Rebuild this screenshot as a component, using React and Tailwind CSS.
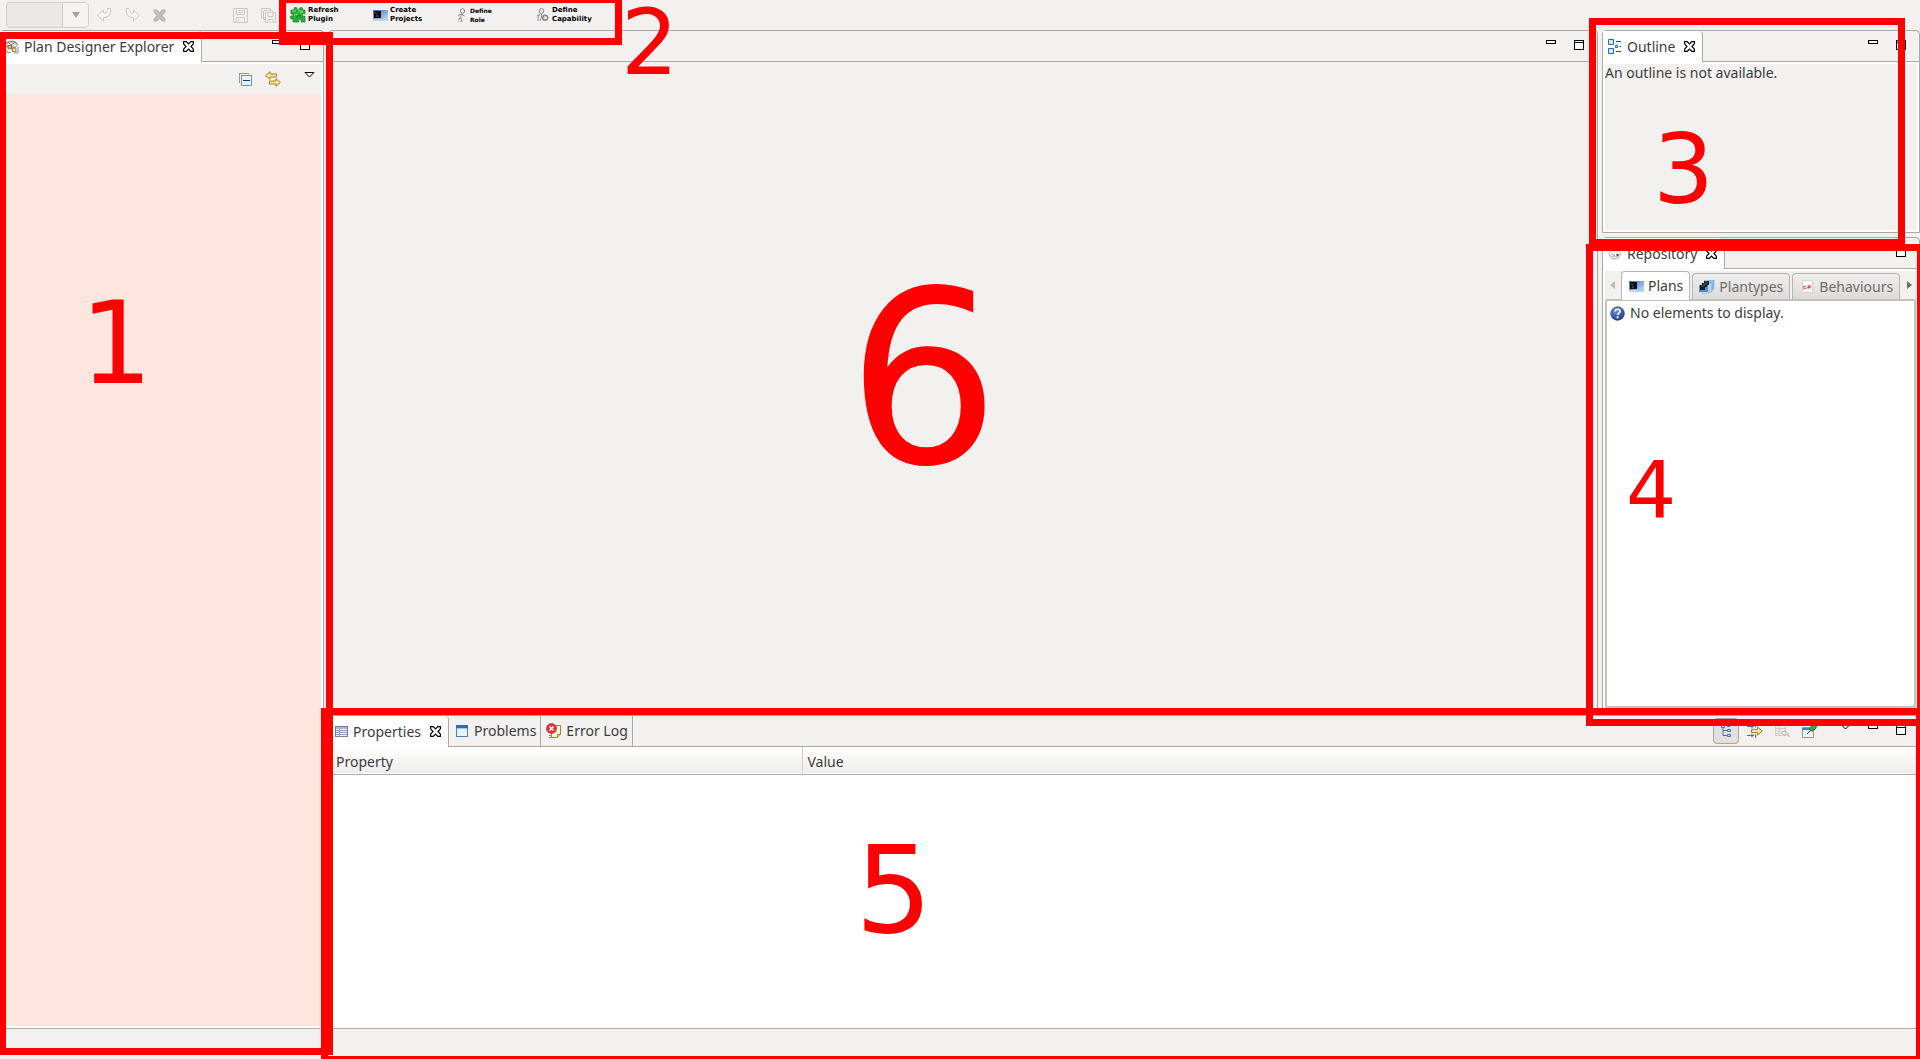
import React from "react";

/* ---------- icons ---------- */

const CloseIcon = () => (
  <svg width="11" height="11" viewBox="0 0 11 11" fill="#fff" stroke="#000" strokeWidth="1.200">
    <path d="M.6.6h2.600L5.500 3 7.800.6h2.600v2.200L8 5.500l2.400 2.700v2.200H7.800L5.500 8 3.200 10.400H.6V8.200L3 5.500.6 2.800z" />
  </svg>
);
const MinIcon = () => (
  <svg width="10" height="10" viewBox="0 0 10 10" shapeRendering="crispEdges">
    <rect x=".5" y=".5" width="9" height="3" fill="#fff" stroke="#000" />
  </svg>
);
const MaxIcon = () => (
  <svg width="10" height="10" viewBox="0 0 10 10" shapeRendering="crispEdges">
    <path d="M.5.5h9v9h-9zM.5 2.500h9" fill="#fff" stroke="#000" />
  </svg>
);
const MenuIcon = () => (
  <svg width="11" height="6" viewBox="0 0 11 6">
    <path d="M1 .5h9L5.500 5z" fill="#fff" stroke="#000" />
  </svg>
);
const ExplorerIcon = () => (
  <svg width="14" height="14" viewBox="0 0 14 14" fill="none">
    <ellipse cx="6.500" cy="4.500" rx="6" ry="3.600" fill="#dcdcdc" stroke="#8a8a8a" strokeWidth=".8" />
    <path d="M1 4c3-3 8-3 11 0M2 7l9-5M3 2l6 6" stroke="#777" strokeWidth=".8" />
    <rect x="3" y="5.500" width="3.500" height="3.500" fill="#e4b254" stroke="#8e6a2a" strokeWidth=".8" />
    <rect x="7.500" y="8" width="3.500" height="3.500" fill="#efd9a5" stroke="#8e6a2a" strokeWidth=".8" />
    <path d="M2 10v2.500h4M13 7v6H9" stroke="#6b9cc4" />
  </svg>
);
const RepositoryIcon = () => (
  <svg width="14" height="14" viewBox="0 0 14 14" fill="none">
    <ellipse cx="7" cy="7.500" rx="6" ry="4.500" fill="#f1f1f1" stroke="#c4c4c4" strokeWidth=".8" />
    <path d="M1 8c4 3 8 2 12-1M3 11.500c3 1 6 0 8-2" stroke="#b0b0b0" strokeWidth=".8" />
    <circle cx="9.500" cy="8" r="1.200" fill="#555" />
    <path d="M4 7l3 2" stroke="#999" />
  </svg>
);
const OutlineIcon = () => (
  <svg width="14" height="15" viewBox="0 0 14 15" fill="#d4ecf7" stroke="#1d6cab">
    <path d="M.5.5h5v5h-5zM.5 9.500h5v5h-5z" />
    <path d="M8 2.500h5M8 12.500h5M11.500 7.500H13" stroke="#1d4e89" />
    <path d="M7.500 6.500h2v2h-2z" />
  </svg>
);
const TableIcon = () => (
  <svg width="13" height="11" viewBox="0 0 13 11" shapeRendering="crispEdges">
    <rect x=".5" y=".5" width="12" height="10" fill="#f3f6fb" stroke="#6d7b98" />
    <rect x="1" y="1" width="11" height="2" fill="#a9b6cc" />
    <path d="M1 4.500h11M1 6.500h11M1 8.500h11M4.500 3v8" stroke="#8f9cb8" />
  </svg>
);
const ProblemsIcon = () => (
  <svg width="12" height="12" viewBox="0 0 12 12" shapeRendering="crispEdges">
    <rect x=".5" y=".5" width="11" height="11" fill="#e6f3fa" stroke="#4d7fae" />
    <rect width="12" height="3" fill="#2f6dae" />
    <path d="M1 3.500h10" stroke="#a9cbe6" />
  </svg>
);
const ErrorLogIcon = () => (
  <svg width="16" height="16" viewBox="0 0 16 16">
    <path d="M6 2.500h8.500v9l-3 3H5.500V10" fill="#fdf6dc" stroke="#a5853c" />
    <path d="M11.500 14.500v-3h3" fill="#e8c987" stroke="#a5853c" />
    <circle cx="5.500" cy="5.500" r="5" fill="#e0303a" stroke="#b8424a" strokeWidth=".8" />
    <path d="M3.500 3.500l4 4M7.500 3.500l-4 4" stroke="#fff" strokeWidth="1.600" />
    <path d="M4 12v1M4 14v1" stroke="#2f6dae" strokeWidth="1.500" />
  </svg>
);
const UndoIcon = () => (
  <svg width="15" height="14" viewBox="0 0 15 14" fill="#f7f6f5" stroke="#cbc8c5">
    <path d="M.7 7.500L6.500 2v3c3 .5 4-1.500 4.500-4.500h2.500c1 5-1 9-7 9V13z" />
  </svg>
);
const RedoIcon = () => (
  <svg width="15" height="14" viewBox="0 0 15 14" fill="#f7f6f5" stroke="#cbc8c5">
    <path d="M14.300 7.500L8.500 2v3C5.500 5.500 4.500 3.500 4 .5H1.500c-1 5 1 9 7 9V13z" />
  </svg>
);
const DeleteIcon = () => (
  <svg width="13" height="13" viewBox="0 0 13 13" fill="#c0bdba" stroke="#b3b0ad">
    <path d="M1 1h3l2.500 3L9 1h3v2L9 6.500l3 3.500v2H9L6.500 9 4 12H1v-2l3-3.500L1 3z" />
  </svg>
);
const SaveIcon = () => (
  <svg width="15" height="15" viewBox="0 0 15 15" fill="none" stroke="#cbc8c5">
    <path d="M.5.5h14v14H.5z" />
    <path d="M3.500.5v6h8v-6M5 2.500h5M5 4.500h5M3.500 14.500v-5h8v5M5.500 11v2" />
  </svg>
);
const SaveAllIcon = () => (
  <svg width="15" height="15" viewBox="0 0 15 15" fill="#f2f1f0" stroke="#cbc8c5">
    <path d="M.5.5h9v9h-9zM2.500 2.500h9v9h-9z" />
    <path d="M4.500 4.500h10v10h-10z" />
    <path d="M7 4.500v4h5v-4M7 14.500v-3h5v3" />
  </svg>
);
const PuzzleIcon = () => (
  <svg width="16" height="16" viewBox="0 0 16 16">
    <path
      d="M1 3h3.500C3.500 1 4.500.3 5.500.3S7.500 1 6.800 3H9c0-1 .5-2.500 2-2.500S13.500 2 12.500 3H15v4c-1.500-.8-2.500 0-2.500 1s1 2 2.500 1.200V15h-4c.7-1.800 0-2.700-1.200-2.700S8 13.200 8.800 15H3v-3.500C1.500 12.500.3 12 .3 10.500S1.500 8.700 3 9.300V7H1z"
      fill="#27ae38"
      stroke="#148024"
      strokeWidth=".7"
    />
    <path d="M2 4h4M8 4h5M4 8l4-1M10 6l3-1" stroke="#7fe08a" />
    <path d="M6 11l3-3 3 3" stroke="#12701f" fill="none" />
  </svg>
);
const PlanIcon = () => (
  <svg width="15" height="11" viewBox="0 0 15 11">
    <defs>
      <linearGradient id="planSky" x1="0" y1="0" x2="1" y2="1">
        <stop offset="0" stopColor="#2f6fb8" />
        <stop offset="1" stopColor="#cfe6fa" />
      </linearGradient>
    </defs>
    <rect width="15" height="11" fill="url(#planSky)" />
    <rect y="9" width="15" height="2" fill="#b9d3ea" />
    <rect x="1" y="1" width="7" height="7" fill="#0a0c10" />
    <path d="M2 2.500l2 1.500M3 6h2" stroke="#667" />
  </svg>
);
const PlantypesIcon = () => (
  <svg width="16" height="14" viewBox="0 0 16 14">
    <path d="M5 1l10-1v8l-3 4z" fill="#8fc0ee" stroke="#6d9fd2" strokeWidth=".6" />
    <path d="M3 3h10v8l-3 2H3z" fill="#b5d7f5" stroke="#5f95cc" strokeWidth=".6" />
    <path d="M0 5h9v8H0z" fill="#4d8fd6" />
    <path d="M5 1h5v4H8v2H6v3H1V5h2V3h2z" fill="#14181f" />
    <path d="M2 6h4M4 4h4M6 2h3" stroke="#7b8794" strokeWidth=".7" />
    <path d="M0 12.500h9" stroke="#bcd8f0" />
  </svg>
);
const RoleIcon = () => (
  <svg width="9" height="14" viewBox="0 0 9 14" fill="none" stroke="#8a8a8a">
    <circle cx="5.500" cy="3" r="2.200" fill="#eee" />
    <path d="M5 5.500L3.500 9 5 13.500M3.500 9L1.500 12M5 6.500L7.500 8M4.500 6L1 7.500" />
    <path d="M1 13.300h5" stroke="#c4c4c4" />
  </svg>
);
const CapabilityIcon = () => (
  <svg width="13" height="14" viewBox="0 0 13 14" fill="none" stroke="#8f8f8f">
    <circle cx="5.500" cy="3" r="2.400" fill="#e6e6e6" />
    <path d="M4 5.500L2 9v4M5.500 5.500V9L4 13M3.500 6.500L1 8" />
    <circle cx="9.200" cy="9.800" r="2.500" fill="#d3dae2" stroke="#7f8994" strokeWidth="1.400" />
    <circle cx="9.200" cy="9.800" r=".7" fill="#fff" stroke="none" />
  </svg>
);
const CollapseAllIcon = () => (
  <svg width="13" height="13" viewBox="0 0 13 13" shapeRendering="crispEdges">
    <path d="M.5 10V.5H10" fill="none" stroke="#7f9db9" />
    <rect x="2.500" y="2.500" width="10" height="10" fill="#e9f5fc" stroke="#6e93b5" />
    <path d="M4 7.500h7" stroke="#123e7c" />
  </svg>
);
const LinkIcon = () => (
  <svg width="16" height="16" viewBox="0 0 16 16" fill="#fbe9ae" stroke="#b57b0c">
    <path d="M.7 4.500L5 .7v2.300h6.500v3H5v2.300zM15.300 11.500L11 7.700v2.300H4.500v3H11v2.300z" />
  </svg>
);
const TreeIcon = () => (
  <svg width="10" height="12" viewBox="0 0 10 12" fill="#c9d9ef" stroke="#4f70aa">
    <path d="M.5.5h3v2h-3zM6.500 4.500h3v2h-3zM6.500 9.500h3v2h-3z" />
    <path d="M2 3v7.500h4M2 5.500h4M6 1.500h3" fill="none" />
  </svg>
);
const FilterIcon = () => (
  <svg width="16" height="14" viewBox="0 0 16 14" fill="none">
    <path d="M0 2.500h7M5 .5v4M0 11.500h7M5 9.500v4M8.500.5v3M8.500 10v4" stroke="#5a6a8a" />
    <path d="M4.500 5.500h6V3l4.800 4-4.800 4V8.500h-6z" fill="#fbe6a4" stroke="#b57b0c" />
  </svg>
);
const RestoreIcon = () => (
  <svg width="15" height="13" viewBox="0 0 15 13" fill="none" stroke="#cfccc9">
    <path d="M.5.5h10v10H.5zM.5 3.500h10M.5 6h10M.5 8.500h7M4 .5v10" />
    <path d="M6.500 8L10 5v2c3 0 4 2 4 5-1-2-2-2.500-4-2.500V11z" fill="#e8e6e4" stroke="#bfbcb9" />
  </svg>
);
const PinIcon = () => (
  <svg width="15" height="14" viewBox="0 0 15 14">
    <path d="M.5 3.500h11v10H.5z" fill="#eaf5fb" stroke="#9c9a86" />
    <path d="M0 5h9" stroke="#3f7fc0" strokeWidth="2" />
    <path d="M5 10l4-4" stroke="#2b3a4a" />
    <path d="M7.500 4.500l3-3.500 4 .8-1 3-3.500 2.500z" fill="#3fa648" stroke="#1c6e2b" />
  </svg>
);
const HelpIcon = () => (
  <svg width="15" height="15" viewBox="0 0 15 15">
    <defs>
      <radialGradient id="helpBall" cx=".4" cy=".3" r=".8">
        <stop offset="0" stopColor="#6f93d8" />
        <stop offset="1" stopColor="#142f7c" />
      </radialGradient>
    </defs>
    <circle cx="7.500" cy="7.500" r="7.200" fill="url(#helpBall)" />
    <path d="M5.200 5.500c0-3 4.800-3 4.800 0 0 1.500-2.300 1.700-2.300 3.500" fill="none" stroke="#fff" strokeWidth="1.700" />
    <circle cx="7.600" cy="11.300" r="1.100" fill="#fff" />
  </svg>
);

const BehavioursIcon = () => (
  <span className="flex h-[13px] w-[11px] items-center justify-center rounded-[1px] border border-[#d5d3d1] bg-white font-['DejaVu_Sans'] text-[6px] leading-none font-bold text-[#e04444]">
    c#
  </span>
);

/* ---------- building blocks ---------- */

const IconButton = ({ label, className = "", children }) => (
  <button type="button" aria-label={label} className={`flex shrink-0 items-center justify-center ${className}`}>
    {children}
  </button>
);

function WindowButtons() {
  return (
    <div className="flex gap-[18px] pt-[9px] pr-[13px]">
      <IconButton label="Minimize" className="h-[10px]"><MinIcon /></IconButton>
      <IconButton label="Maximize" className="h-[10px]"><MaxIcon /></IconButton>
    </div>
  );
}

function Tab({ icon, label, active, first }) {
  return (
    <div
      className={`flex shrink-0 items-center border-r border-[#aca8a3] ${
        active ? "rounded-tr-[4px] bg-white pr-[7px]" : "border-b pr-1"
      } ${first ? "pl-[5px]" : "pl-[6px]"}`}
    >
      <button type="button" role="tab" aria-selected={!!active} className="flex items-center gap-[5px]">
        <span className="flex w-[14px] justify-center [&>svg]:shrink-0">{icon}</span>
        <span className="whitespace-nowrap">{label}</span>
      </button>
      {active && (
        <IconButton label={`Close ${label}`} className="ml-[9px] w-[11px]"><CloseIcon /></IconButton>
      )}
    </div>
  );
}

function Folder({ tabs, tools, className = "", children }) {
  return (
    <section className={`flex min-h-0 min-w-0 flex-col rounded-t-[4px] border border-[#aca8a3] ${className}`}>
      <div role="tablist" className="flex h-[31px] shrink-0">
        {tabs.map((t, i) => <Tab key={t.label} first={i === 0} {...t} />)}
        <div className="flex min-w-0 flex-1 justify-end border-b border-[#aca8a3]">
          {tools}
          <WindowButtons />
        </div>
      </div>
      {children}
    </section>
  );
}

function LaunchButton({ icon, lines, width, small }) {
  return (
    <button type="button" className={`flex items-center text-left ${small ? "gap-px" : "gap-[2px]"} ${width}`}>
      <span className="flex w-4 justify-center">{icon}</span>
      <span
        className={`font-['DejaVu_Sans'] leading-[9px] font-bold text-black ${small ? "text-[6px]" : "text-[7px]"}`}
      >
        {lines[0]}
        <br />
        {lines[1]}
      </span>
    </button>
  );
}

function Toolbar() {
  return (
    <header className="flex h-[30px] shrink-0 items-center pl-[6px]">
      <div className="relative h-[26px] w-[83px]">
        <select
          aria-label="Zoom"
          disabled
          className="h-full w-full appearance-none rounded-[4px] border border-[#d0cdca] bg-[#ebe9e7]"
        />
        <span className="pointer-events-none absolute inset-y-px right-px flex w-[26px] items-center justify-center rounded-r-[3px] border-l border-[#d0cdca] bg-[#f4f3f2]">
          <svg width="8" height="6" viewBox="0 0 8 6"><path d="M0 0h8L4 6z" fill="#a5a19e" /></svg>
        </span>
      </div>
      <div className="ml-2 flex items-center gap-[13px]">
        <IconButton label="Undo"><UndoIcon /></IconButton>
        <IconButton label="Redo"><RedoIcon /></IconButton>
        <IconButton label="Delete"><DeleteIcon /></IconButton>
      </div>
      <div className="ml-[67px] flex items-center gap-[13px]">
        <IconButton label="Save"><SaveIcon /></IconButton>
        <IconButton label="Save all"><SaveAllIcon /></IconButton>
      </div>
      <div className="ml-[14px] flex items-center">
        <LaunchButton width="w-[82px]" icon={<PuzzleIcon />} lines={["Refresh", "Plugin"]} />
        <LaunchButton width="w-[81px]" icon={<PlanIcon />} lines={["Create", "Projects"]} />
        <LaunchButton width="w-[81px]" small icon={<RoleIcon />} lines={["Define", "Role"]} />
        <LaunchButton width="w-[82px]" icon={<CapabilityIcon />} lines={["Define", "Capability"]} />
      </div>
    </header>
  );
}

function Explorer() {
  return (
    <Folder
      className="w-[324px] shrink-0 border-l-0"
      tabs={[{ icon: <ExplorerIcon />, label: "Plan Designer Explorer", active: true }]}
    >
      <div className="flex min-h-0 flex-1 flex-col border-2 border-white">
        <div className="flex h-[30px] shrink-0 items-center justify-end pr-[6px]">
          <IconButton label="Collapse all"><CollapseAllIcon /></IconButton>
          <IconButton label="Link with editor" className="ml-[13px]"><LinkIcon /></IconButton>
          <IconButton label="View menu" className="mb-[9px] ml-[23px]"><MenuIcon /></IconButton>
        </div>
        <div className="flex-1 bg-[#fde6de]" />
      </div>
    </Folder>
  );
}

function RepoTab({ icon, label, active }) {
  return (
    <button
      type="button"
      role="tab"
      aria-selected={!!active}
      className={`flex items-center gap-1 rounded-t-[4px] border border-b-0 border-[#b8b4b0] whitespace-nowrap ${
        active
          ? "relative -mb-px h-[29px] bg-white px-[6px]"
          : "h-[26px] bg-linear-to-b from-[#f0efee] to-[#dddbd9] px-[6px] text-[#6e6c6a]"
      }`}
    >
      <span className="flex w-4 justify-center">{icon}</span>
      {label}
    </button>
  );
}

function Repository() {
  return (
    <Folder
      className="flex-1"
      tabs={[{ icon: <RepositoryIcon />, label: "Repository", active: true }]}
    >
      <div className="flex min-h-0 flex-1 flex-col border-2 border-white">
        <div role="tablist" className="flex h-[28px] shrink-0 items-end gap-[2px]">
          <IconButton label="Scroll tabs left" className="h-7 w-[14px]">
            <svg width="5" height="8" viewBox="0 0 5 8"><path d="M5 0v8L0 4z" fill="#bcb9b6" /></svg>
          </IconButton>
          <RepoTab active icon={<PlanIcon />} label="Plans" />
          <RepoTab icon={<PlantypesIcon />} label="Plantypes" />
          <RepoTab icon={<BehavioursIcon />} label="Behaviours" />
          <IconButton label="Scroll tabs right" className="h-7 flex-1">
            <svg width="5" height="8" viewBox="0 0 5 8"><path d="M0 0v8l5-4z" fill="#6f6c69" /></svg>
          </IconButton>
        </div>
        <ul className="mr-px flex-1 rounded-[2px] border-2 border-[#c4c1bd] bg-white px-[3px] pt-[3px]">
          <li className="flex items-center gap-[5px] leading-[18px]">
            <HelpIcon />
            No elements to display.
          </li>
        </ul>
      </div>
    </Folder>
  );
}

function Properties() {
  return (
    <Folder
      className="h-[314px] shrink-0"
      tabs={[
        { icon: <TableIcon />, label: "Properties", active: true },
        { icon: <ProblemsIcon />, label: "Problems" },
        { icon: <ErrorLogIcon />, label: "Error Log" },
      ]}
      tools={
        <div className="flex h-[30px] items-center">
          <IconButton
            label="Show categories"
            className="h-[26px] w-[26px] rounded-[4px] border border-[#a9a5a1] bg-[#e2e0de]"
          >
            <TreeIcon />
          </IconButton>
          <IconButton label="Show advanced properties" className="ml-2"><FilterIcon /></IconButton>
          <IconButton label="Restore default value" className="ml-3"><RestoreIcon /></IconButton>
          <IconButton label="Pin to selection" className="ml-3"><PinIcon /></IconButton>
          <IconButton label="View menu" className="mr-[17px] mb-[8px] ml-[23px]"><MenuIcon /></IconButton>
        </div>
      }
    >
      <div className="flex-1 bg-white">
        <table className="w-full table-fixed border-collapse">
          <thead>
            <tr className="h-[27px] border-b border-[#aca8a3] bg-linear-to-b from-white to-[#eeedeb] text-left">
              <th className="w-[473px] border-r border-[#d0cdca] pt-[3px] pl-[7px] font-normal">Property</th>
              <th className="pt-[3px] pl-[5px] font-normal">Value</th>
            </tr>
          </thead>
          <tbody />
        </table>
      </div>
    </Folder>
  );
}

function Annotations() {
  return (
    <div className="pointer-events-none absolute inset-0 overflow-hidden font-['DejaVu_Sans'] leading-none text-[#ff0000]">
      <div className="absolute top-8 -left-px h-[1023px] w-[334px] border-7 border-[#ff0000]" />
      <div className="absolute -top-1 left-[279px] h-[49px] w-[343px] border-7 border-[#ff0000]" />
      <div className="absolute top-[18px] left-[1589px] h-[228px] w-[316px] border-7 border-[#ff0000]" />
      <div className="absolute top-[244px] left-[1586px] h-[482px] w-[338px] border-7 border-[#ff0000]" />
      <div className="absolute top-[708px] left-[321px] h-[355px] w-[1602px] border-7 border-[#ff0000]" />
      <span className="absolute top-[287px] left-[80px] text-[114px]">1</span>
      <span className="absolute top-0 left-[621px] text-[90px] leading-[86px]">2</span>
      <span className="absolute top-[122px] left-[1653px] text-[96px]">3</span>
      <span className="absolute top-[452px] left-[1626px] text-[79px]">4</span>
      <span className="absolute top-[829px] left-[855px] text-[122px]">5</span>
      <span className="absolute top-[260px] left-[847px] text-[240px]">6</span>
    </div>
  );
}

export default function App() {
  return (
    <div className="relative flex h-screen flex-col overflow-hidden bg-[#f2f1f0] font-['Noto_Sans',sans-serif] text-[14px] leading-5 text-[#3c3c3c]">
      <Toolbar />
      <main className="flex min-h-0 flex-1 gap-1">
        <Explorer />
        <div className="flex min-w-0 flex-1 flex-col gap-1">
          <div className="flex min-h-0 flex-1 gap-1">
            <Folder className="flex-1" tabs={[]}>
              <div className="flex-1" />
            </Folder>
            <div className="flex w-[318px] shrink-0 flex-col gap-1">
              <Folder
                className="h-[203px] shrink-0"
                tabs={[{ icon: <OutlineIcon />, label: "Outline", active: true }]}
              >
                <p className="flex-1 border-2 border-white leading-[18px]">An outline is not available.</p>
              </Folder>
              <Repository />
            </div>
          </div>
          <Properties />
        </div>
      </main>
      <footer className="h-[30px] shrink-0" />
      <Annotations />
    </div>
  );
}
